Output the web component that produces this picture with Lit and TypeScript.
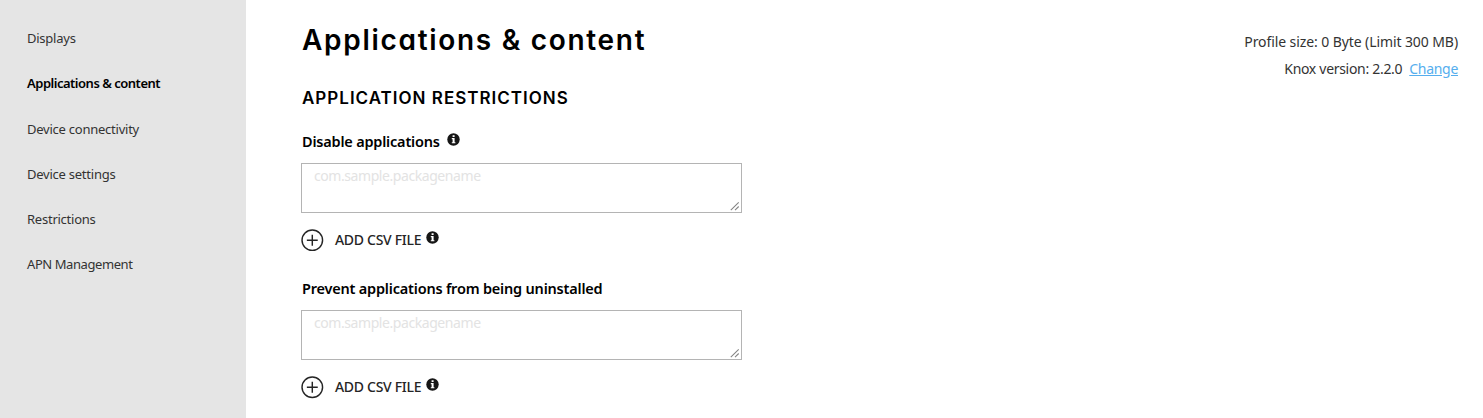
import { LitElement, html, css } from "lit";
import { customElement, property } from "lit/decorators.js";

@customElement("info-icon")
class InfoIcon extends LitElement {
  static styles = css`
    :host { display: block; width: 13px; height: 13px; }
    .icon { display: block; width: 13px; height: 13px; }
  `;
  render() {
    return html`<svg class="icon" viewBox="0 0 13 13">
      <circle cx="6.5" cy="6.5" r="6.2" fill="#161616" />
      <path d="M5.6 2.3h2v1.8h-2zM4.8 5.1h2.8v4.1h.8v1.1H4.8V9.2h.8V6.2h-.8z" fill="#fff" />
    </svg>`;
  }
}

@customElement("package-field")
class PackageField extends LitElement {
  @property() label = "";
  @property({ type: Boolean }) info = false;

  static styles = css`
    :host { display: block; height: 147.3px; }
    .head { display: flex; height: 22px; padding-left: 1px; align-items: center; gap: 7px; }
    .label { font-size: 14.5px; font-weight: 600; letter-spacing: -0.2px; line-height: 22px; color: #000; white-space: nowrap; }
    .hint { margin-top: -3px; }
    .box { box-sizing: border-box; display: flex; justify-content: space-between; width: 441px; height: 50px; margin-top: 11px; padding: 2px 1px 1px 12px; border: 1px solid #b4b4b4; background: #fff; }
    .placeholder { font-size: 14px; letter-spacing: -0.43px; line-height: 20px; color: #e3e3e3; }
    .grip { align-self: flex-end; display: block; width: 10px; height: 10px; }
    .add { display: flex; height: 22px; margin-top: 16.2px; align-items: center; }
    .plus { display: block; width: 22.6px; height: 22.6px; }
    .add-label { margin-left: 11.4px; font-size: 14px; font-weight: 500; letter-spacing: -0.3px; line-height: 22px; color: #252525; white-space: nowrap; }
    .add-hint { margin: -5px 0 0 5px; }
  `;
  render() {
    return html`
      <div class="head">
        <span class="label">${this.label}</span>
        ${this.info ? html`<info-icon class="hint"></info-icon>` : ""}
      </div>
      <div class="box">
        <span class="placeholder">com.sample.packagename</span>
        <svg class="grip" viewBox="0 0 10 10"><path d="M.8 9.2 8.7 1.3M5 9.2 8.7 5.5" stroke="#858585" stroke-width="1.1" /></svg>
      </div>
      <div class="add">
        <svg class="plus" viewBox="0 0 22 22" fill="none" stroke="#252525">
          <circle cx="11" cy="11" r="10" stroke-width="1.4" />
          <path d="M11 5.7v10.6M5.7 11h10.6" stroke-width="1.4" />
        </svg>
        <span class="add-label">ADD CSV FILE</span>
        <info-icon class="add-hint"></info-icon>
      </div>
    `;
  }
}

@customElement("app-root")
class AppRoot extends LitElement {
  items = ["Displays", "Applications & content", "Device connectivity", "Device settings", "Restrictions", "APN Management"];

  static styles = css`
    :host { display: flex; width: 100%; height: 418px; overflow: hidden; background: #fff; font-family: "Noto Sans", "Open Sans", sans-serif; }
    .nav { box-sizing: border-box; flex: 0 0 246px; padding: 16px 0 0 27px; background: #e5e5e5; }
    .item { height: 45.25px; line-height: 45.25px; font-size: 13px; letter-spacing: -0.24px; color: #333; white-space: nowrap; }
    .item:last-child { letter-spacing: -0.42px; }
    .active { font-weight: 600; letter-spacing: -0.49px; color: #000; }
    .main { flex: 1; display: flex; justify-content: space-between; padding: 0 25px 0 56px; }
    .title { margin: 22px 0 0; height: 36px; font: 600 28px/36px Inter, sans-serif; font-feature-settings: "cv11"; letter-spacing: 1.7px; color: #000; white-space: nowrap; }
    .section { margin: 29px 0 0; height: 22px; font: 600 17px/22px Inter, sans-serif; letter-spacing: 1px; color: #000; white-space: nowrap; }
    .fields { margin: 21px 0 0 -1px; }
    .meta { padding-top: 28px; font-size: 14px; line-height: 27px; color: #333; text-align: right; white-space: nowrap; }
    .size { letter-spacing: -0.09px; }
    .version { letter-spacing: -0.3px; }
    .link { margin-left: 7px; color: #55aeee; text-decoration: underline; }
  `;
  render() {
    return html`
      <nav class="nav">
        ${this.items.map((t, i) => html`<div class="item ${i === 1 ? "active" : ""}"><span>${t}</span></div>`)}
      </nav>
      <main class="main">
        <div>
          <h1 class="title">Applications &amp; content</h1>
          <h2 class="section">APPLICATION RESTRICTIONS</h2>
          <div class="fields">
            <package-field label="Disable applications" info></package-field>
            <package-field label="Prevent applications from being uninstalled"></package-field>
          </div>
        </div>
        <div class="meta">
          <div class="size">Profile size: 0 Byte (Limit 300 MB)</div>
          <div class="version">Knox version: 2.2.0<a class="link">Change</a></div>
        </div>
      </main>
    `;
  }
}
